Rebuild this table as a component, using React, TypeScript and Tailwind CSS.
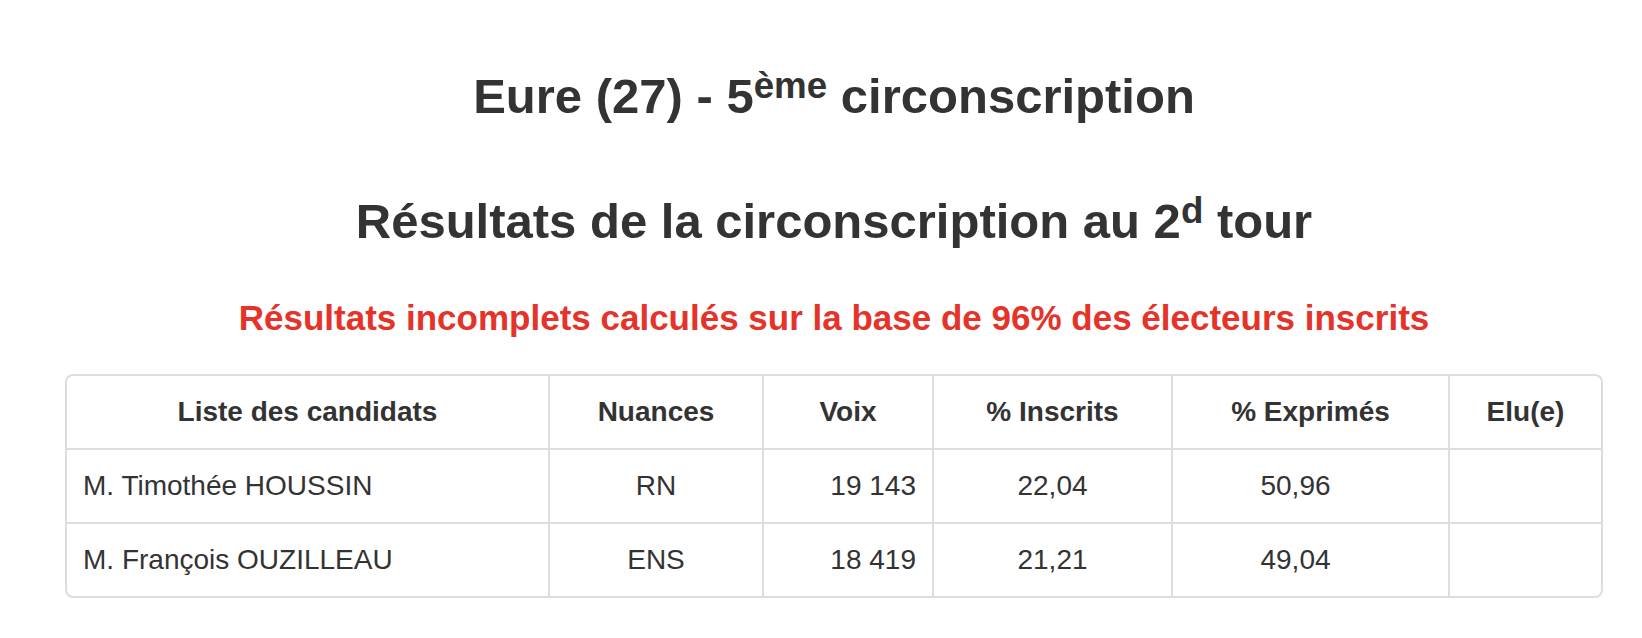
const candidats = [
  { nom: "M. Timothée HOUSSIN", nuance: "RN", voix: "19 143", inscrits: "22,04", exprimes: "50,96" },
  { nom: "M. François OUZILLEAU", nuance: "ENS", voix: "18 419", inscrits: "21,21", exprimes: "49,04" },
];

const th = "border-[#ddd] px-4 py-4 text-center font-bold leading-[40px]";
const td = "border-t-2 border-[#ddd] px-4 py-4 leading-[40px]";

export default function App() {
  return (
    <div className="min-h-[638px] bg-white pl-[65px] pr-[39px] pt-[69px] text-[#333] [font-family:'Liberation_Sans',Arial,sans-serif]">
      <h1 className="text-center text-[49px] font-bold leading-[54px]">
        Eure (27) - 5<sup className="top-[-0.42em]">ème</sup> circonscription
      </h1>
      <h2 className="mt-[71px] text-center text-[49px] font-bold leading-[54px]">
        Résultats de la circonscription au 2<sup className="top-[-0.42em]">d</sup> tour
      </h2>
      <p className="mt-[50px] text-center text-[35px] font-bold leading-[39px] text-[#e5332a]">
        Résultats incomplets calculés sur la base de 96% des électeurs inscrits
      </p>
      <div className="mt-[37px] overflow-hidden rounded-lg border-2 border-[#ddd]">
        <table className="w-full table-fixed border-collapse text-[28px]">
          <colgroup>
            <col className="w-[482px]" />
            <col className="w-[214px]" />
            <col className="w-[170px]" />
            <col className="w-[239px]" />
            <col className="w-[277px]" />
            <col />
          </colgroup>
          <thead>
            <tr>
              <th className={th}>Liste des candidats</th>
              <th className={`${th} border-l-2`}>Nuances</th>
              <th className={`${th} border-l-2`}>Voix</th>
              <th className={`${th} border-l-2`}>% Inscrits</th>
              <th className={`${th} border-l-2`}>% Exprimés</th>
              <th className={`${th} border-l-2`}>Elu(e)</th>
            </tr>
          </thead>
          <tbody>
            {candidats.map((c) => (
              <tr key={c.nom}>
                <td className={`${td} text-left`}>{c.nom}</td>
                <td className={`${td} border-l-2 text-center`}>{c.nuance}</td>
                <td className={`${td} border-l-2 text-right`}>{c.voix}</td>
                <td className={`${td} border-l-2 text-center`}>{c.inscrits}</td>
                <td className={`${td} border-l-2 pr-[46px] text-center`}>{c.exprimes}</td>
                <td className={`${td} border-l-2`}></td>
              </tr>
            ))}
          </tbody>
        </table>
      </div>
    </div>
  );
}
